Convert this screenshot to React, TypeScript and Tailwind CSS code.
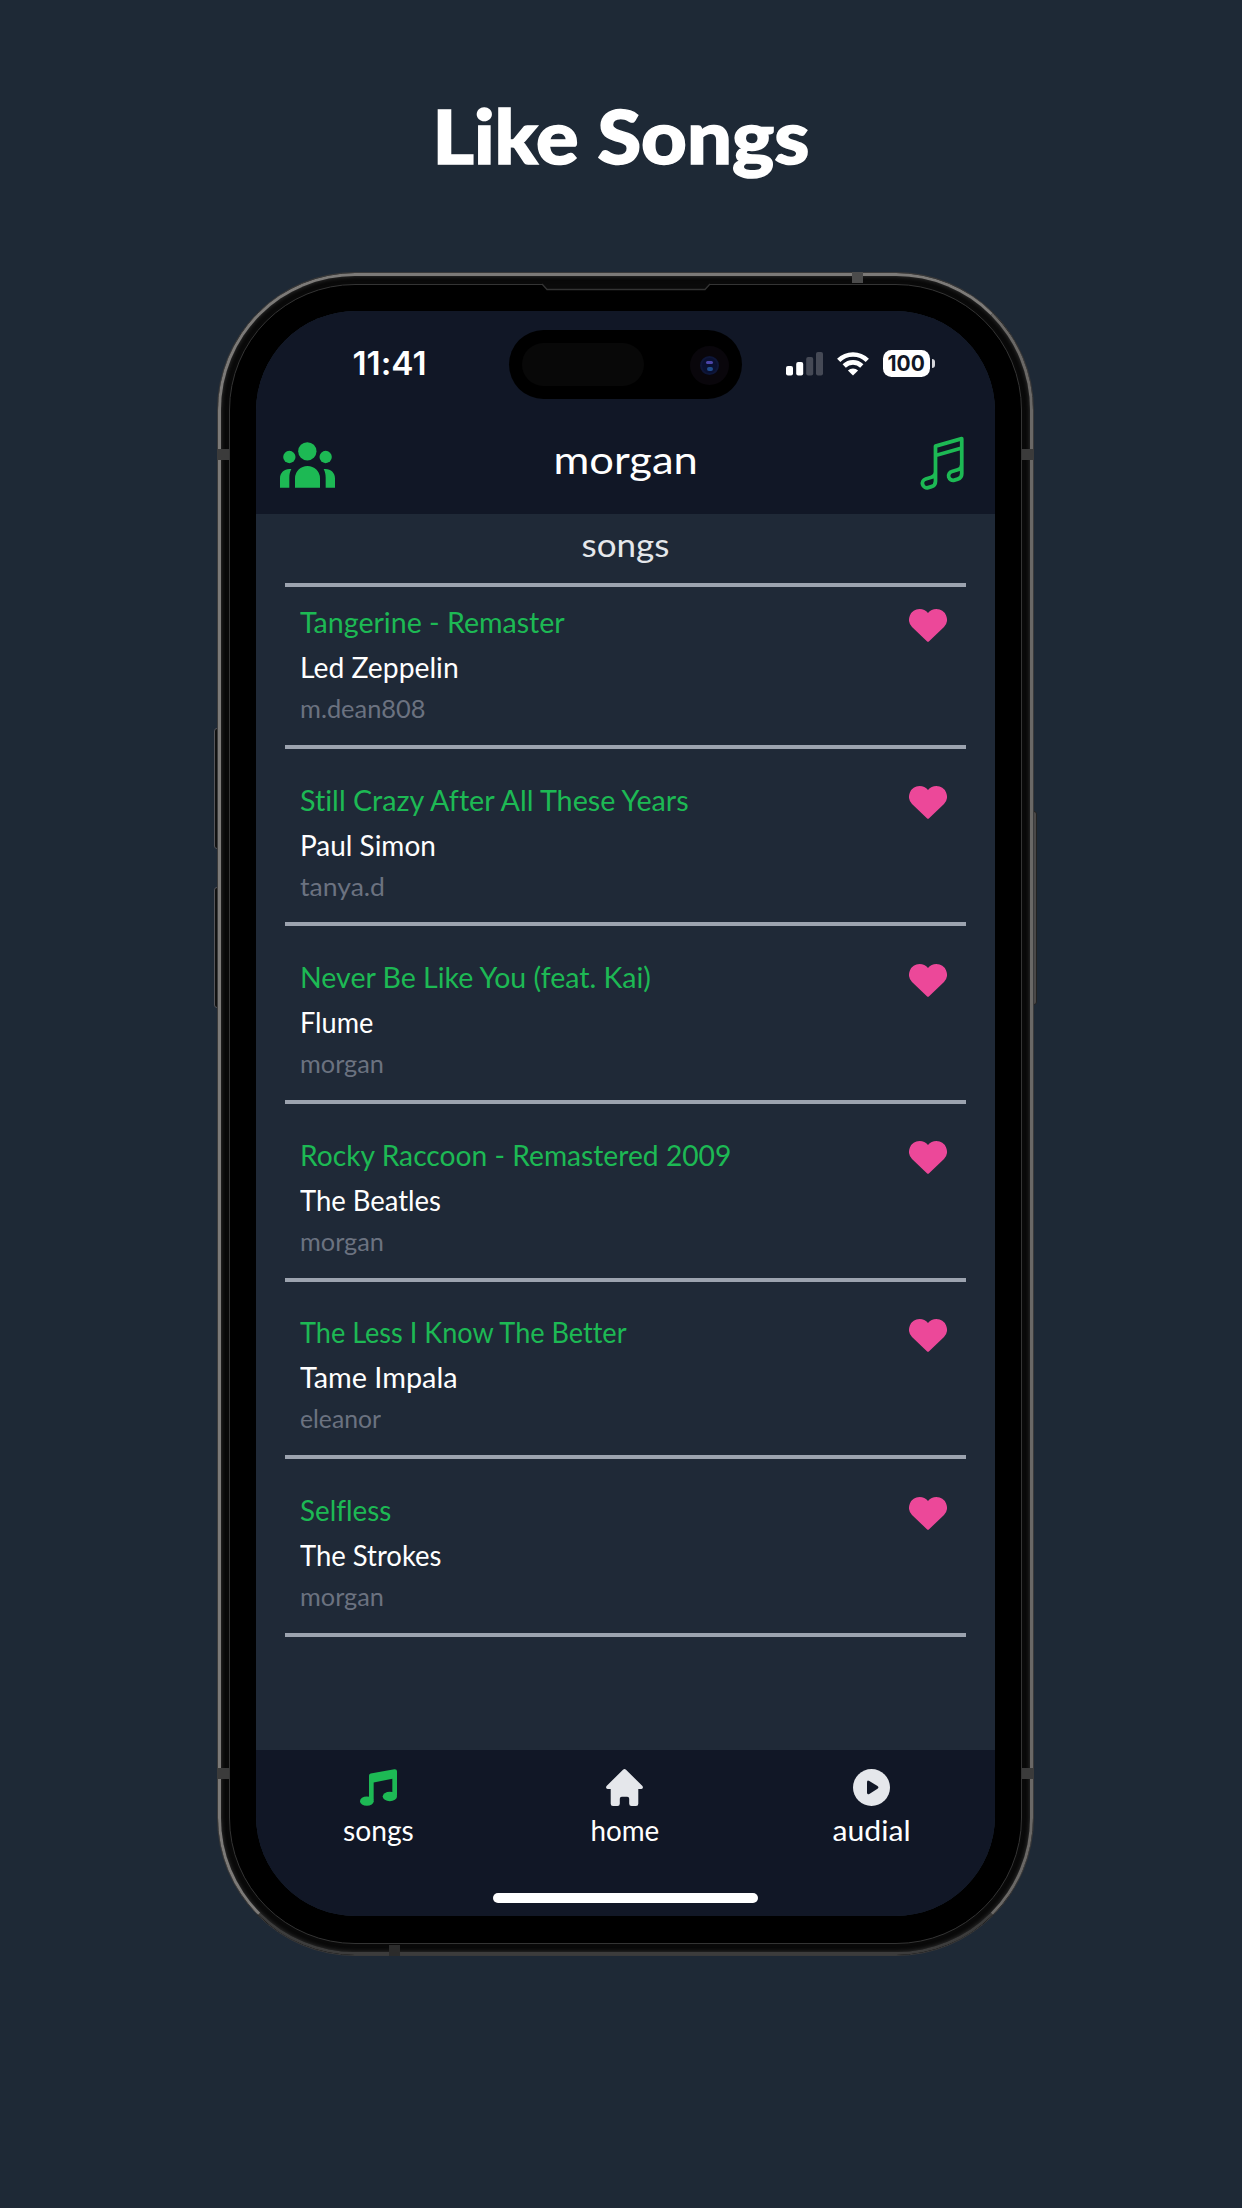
import { useLayoutEffect, useRef, useState } from "react";

type FitProps = { text: string; width: number; className?: string };

/** A single line of text whose glyphs are stretched so it spans `width` pixels. */
function Fit({ text, width, className = "" }: FitProps) {
  const ref = useRef<HTMLSpanElement>(null);
  const [scale, setScale] = useState(1);
  useLayoutEffect(() => {
    if (ref.current) setScale(width / ref.current.offsetWidth);
  }, [text, width]);
  return (
    <span
      ref={ref}
      className={"inline-block whitespace-nowrap [font-variant-ligatures:none] " + className}
      style={{ transform: `scaleX(${scale})` }}
    >
      {text}
    </span>
  );
}

const songs = [
  { title: "Tangerine - Remaster", tw: 265, artist: "Led Zeppelin", aw: 159, user: "m.dean808", uw: 126 },
  { title: "Still Crazy After All These Years", tw: 389, artist: "Paul Simon", aw: 136, user: "tanya.d", uw: 85 },
  { title: "Never Be Like You (feat. Kai)", tw: 351, artist: "Flume", aw: 73, user: "morgan", uw: 84 },
  { title: "Rocky Raccoon - Remastered 2009", tw: 431, artist: "The Beatles", aw: 141, user: "morgan", uw: 84 },
  { title: "The Less I Know The Better", tw: 327, artist: "Tame Impala", aw: 158, user: "eleanor", uw: 81 },
  { title: "Selfless", tw: 91, artist: "The Strokes", aw: 141, user: "morgan", uw: 84 },
];

function Heart() {
  return (
    <svg viewBox="0 0 38 33" className="h-[33px] w-[38px]" fill="#ec4899">
      <path d="M17.9 32.3 3 17.9A10.6 10.6 0 0 1 10.6 0C13.9 0 17 1.4 19 4c2-2.6 5.1-4 8.4-4A10.6 10.6 0 0 1 35 17.9L20.1 32.3q-1.1 1-2.2 0Z" />
    </svg>
  );
}

function People() {
  return (
    <svg viewBox="240 546 165 138" className="h-[46px] w-[55px]" fill="#1db954">
      <circle cx="322" cy="574" r="27.5" />
      <circle cx="268" cy="591" r="18.5" />
      <circle cx="377" cy="591" r="18.5" />
      <path d="M285 683v-28a37.5 37 0 0 1 75 0v28ZM240 683v-28c0-17 13-28 28-28h6c-4 8-6 16-6 26v30ZM405 683v-28c0-17-13-28-28-28h-6c4 8 6 16 6 26v30Z" />
    </svg>
  );
}

function MusicOutline() {
  return (
    <svg viewBox="0 0 24 24" className="size-[60px]" fill="none" stroke="#1db954" strokeWidth="1.5" strokeLinecap="round" strokeLinejoin="round">
      <path d="m9 9 10.5-3m0 6.553v3.75a2.25 2.25 0 0 1-1.632 2.163l-1.32.377a1.803 1.803 0 1 1-.99-3.467l2.31-.66a2.25 2.25 0 0 0 1.632-2.163Zm0 0V2.25L9 5.25v10.303m0 0v3.75a2.25 2.25 0 0 1-1.632 2.163l-1.32.377a1.803 1.803 0 0 1-.99-3.467l2.31-.66A2.25 2.25 0 0 0 9 15.553Z" />
    </svg>
  );
}

function MusicSolid() {
  return (
    <svg viewBox="477 207.500 111 111" className="size-[37px]" fill="#1db954">
      <path d="M504 227q0-5 5-6l71-13q8-1 8 6v74h-14v-51l-56 11v54h-14Z" />
      <ellipse cx="497.500" cy="304" rx="20.500" ry="14" />
      <ellipse cx="566.500" cy="290" rx="21.500" ry="14" />
    </svg>
  );
}

function Home() {
  return (
    <svg viewBox="0 0 37 37" className="size-[37px]" fill="#e5e7eb">
      <path d="M17 .7q1.5-1.4 3 0L36.2 16.8q1 1.1.6 2.2-.4 1-1.700 1h-2.800v14.700q0 2.300-2.300 2.300h-4.500q-2.300 0-2.300-2.300v-5q0-2-2-2h-5.400q-2 0-2 2v5q0 2.300-2.300 2.300H7q-2.300 0-2.300-2.300V20H1.900q-1.300 0-1.700-1-.4-1.100.6-2.200Z" />
    </svg>
  );
}

function Play() {
  return (
    <svg viewBox="0 0 37 37" className="size-[37px]">
      <circle cx="18.500" cy="18.500" r="18.500" fill="#e5e7eb" />
      <path d="M14 13.300q0-2.600 2.300-1.300l8.200 5.100q1.900 1.300 0 2.600l-8.200 5.200Q14 26.200 14 23.600Z" fill="#111726" />
    </svg>
  );
}

function StatusIcons() {
  return (
    <div className="flex items-center">
      <svg viewBox="0 0 37 24" className="h-6 w-[37px]" fill="#fff">
        <rect x="0" y="14" width="7" height="9.500" rx="2" />
        <rect x="10.200" y="10" width="7" height="13.500" rx="2" />
        <rect x="20.200" y="5" width="7" height="18.500" rx="2" fillOpacity="0.22" />
        <rect x="30" y="0" width="7" height="23.500" rx="2" fillOpacity="0.22" />
      </svg>
      <svg viewBox="0 0 32 24" className="ml-[14px] h-6 w-8" fill="none" stroke="#fff" strokeWidth="4.600">
        <path d="M1.700 8.400a20.300 20.300 0 0 1 28.600 0" />
        <path d="M7.200 14a12.500 12.500 0 0 1 17.600 0" />
        <path d="M10.900 18.500a7.200 7.200 0 0 1 10.200 0L16 23.500Z" fill="#fff" stroke="none" />
      </svg>
      <div className="ml-[14px] flex h-[27px] w-[47px] items-center justify-center rounded-[8.500px] bg-white text-[21.500px] leading-none font-bold text-[#111726]">
        <Fit text="100" width={37} />
      </div>
      <div className="ml-[1.500px] h-[9px] w-[3px] rounded-r-full bg-[#d5d6da]" />
    </div>
  );
}

function Island() {
  return (
    <div className="absolute top-[19px] left-[253px] flex h-[69px] w-[233px] items-center justify-between rounded-full bg-black pr-[13px] pl-[13px]">
      <div className="h-[43px] w-[122px] rounded-full bg-[#080808]" />
      <div className="mt-[3px] flex size-[39px] items-center justify-center rounded-full bg-[#09060b]">
        <div className="flex size-[19px] flex-col items-center justify-center gap-[3px] rounded-full border-2 border-[#0e1638] bg-[#0a1030]">
          <div className="h-[3px] w-[7px] rounded-full bg-[#4b45a8]" />
          <div className="h-1 w-[6px] rounded-full bg-[#1f4c8c]" />
        </div>
      </div>
    </div>
  );
}

function Screen() {
  return (
    <div className="relative flex h-[1605.500px] w-[738.500px] flex-col overflow-hidden rounded-[100px] bg-[#1f2937]">
      <header className="h-[203.500px] shrink-0 bg-[#111726]">
        <div className="flex h-[106px] items-center justify-between pr-[60px] pl-[97.500px] font-['Inter',sans-serif] text-white">
          <Fit text="11:41" width={74} className="mt-px text-[32px] leading-[40px] font-semibold" />
          <StatusIcons />
        </div>
        <div className="flex h-[97px] items-start justify-between pr-[22px] pl-[24px]">
          <div className="mt-[25px]"><People /></div>
          <Fit text="morgan" width={144} className="mt-[18px] ml-[3px] text-[39px] leading-[48px] text-white" />
          <div className="mt-[16px]"><MusicOutline /></div>
        </div>
      </header>
      <div className="mx-[28.500px] h-[72.700px] shrink-0 border-b-[4px] border-[#9ca3af] pt-[3px] text-center">
        <Fit text="songs" width={88} className="text-[33px] leading-[54px] text-gray-200" />
      </div>
      <div className="mx-[28.500px] min-h-0 flex-1 overflow-hidden">
        <div className="-mt-[15.400px]">
          {songs.map((s) => (
            <div key={s.title} className="flex h-[177.600px] items-start justify-between border-b-[4px] border-[#9ca3af] pt-[26.700px] pr-[19px] pl-[15px]">
              <div className="mt-px flex flex-col items-start">
                <Fit text={s.title} width={s.tw} className="origin-left text-[29px] leading-[45px] text-[#1db954]" />
                <Fit text={s.artist} width={s.aw} className="origin-left text-[29px] leading-[45px] text-white" />
                <Fit text={s.user} width={s.uw} className="origin-left text-[25px] leading-[38px] text-[#6b7280]" />
              </div>
              <div className="mt-[10.700px]"><Heart /></div>
            </div>
          ))}
        </div>
      </div>
      <nav className="h-[166px] shrink-0 bg-[#111726] pt-[19px]">
        <div className="grid h-[124px] grid-cols-3 text-[29px] leading-[40px] text-white">
          <div className="-ml-[2px] flex flex-col items-center gap-1">
            <MusicSolid />
            <Fit text="songs" width={71} />
          </div>
          <div className="-ml-px flex flex-col items-center gap-1">
            <Home />
            <Fit text="home" width={69} />
          </div>
          <div className="flex flex-col items-center gap-1">
            <Play />
            <Fit text="audial" width={78} />
          </div>
        </div>
        <div className="mx-auto h-[10px] w-[265px] rounded-full bg-white" />
      </nav>
      <Island />
    </div>
  );
}

function Phone() {
  return (
    <div className="relative ml-[217px] h-[1683.500px] w-[817px]">
      <div className="absolute top-[456px] -left-[3px] h-[121px] w-[5px] rounded-l-[3px] border border-[#55555a] bg-[#111]" />
      <div className="absolute top-[615px] -left-[3px] h-[121px] w-[5px] rounded-l-[3px] border border-[#55555a] bg-[#111]" />
      <div className="absolute top-[539px] -right-[3px] h-[194px] w-[5px] rounded-r-[3px] border border-[#222] bg-[#4a4848]" />
      <div className="relative size-full rounded-[138px] border border-[#3a3a3b] bg-black">
        <div className="size-full rounded-[137px] border-[3px] border-[#7c7a78] border-r-[#6a6866] border-b-[#3c3c3c] bg-[#090909] p-[8px] shadow-[inset_0_0_4px_#3a3a3a]">
          <div className="size-full rounded-[126px] border-[1.500px] border-[#343434] bg-black pt-[25.500px] pl-[26px]">
            <Screen />
          </div>
        </div>
      </div>
      <div className="absolute top-[177px] left-0 h-[11px] w-[12px] bg-[#3b3b3b]" />
      <div className="absolute top-[177px] right-0 h-[11px] w-[12px] bg-[#3b3b3b]" />
      <div className="absolute top-[1496px] left-0 h-[11px] w-[12px] bg-[#3b3b3b]" />
      <div className="absolute top-[1496px] right-0 h-[11px] w-[12px] bg-[#3b3b3b]" />
      <div className="absolute top-0 left-[635px] h-[11px] w-[11px] bg-[#4b4b4b]" />
      <div className="absolute bottom-0 left-[172px] h-[11px] w-[11px] bg-[#2b2b2b]" />
      <svg viewBox="0 0 168 8" className="absolute top-[11px] left-[324.500px] h-2 w-[168px]" fill="#0a0a0a">
        <path d="M0 1 5 6.500h158L168 1" stroke="#333" strokeWidth="1.300" />
      </svg>
    </div>
  );
}

export default function App() {
  return (
    <main className="h-[2208px] w-[1242px] overflow-hidden bg-[#1e2936] font-['Lato',sans-serif]">
      <h1 className="h-[272px] pt-[84px] text-center text-[75px] leading-[102px] font-black text-white">
        <Fit text="Like Songs" width={377} className="[-webkit-text-stroke:1.5px_white]" />
      </h1>
      <Phone />
    </main>
  );
}
